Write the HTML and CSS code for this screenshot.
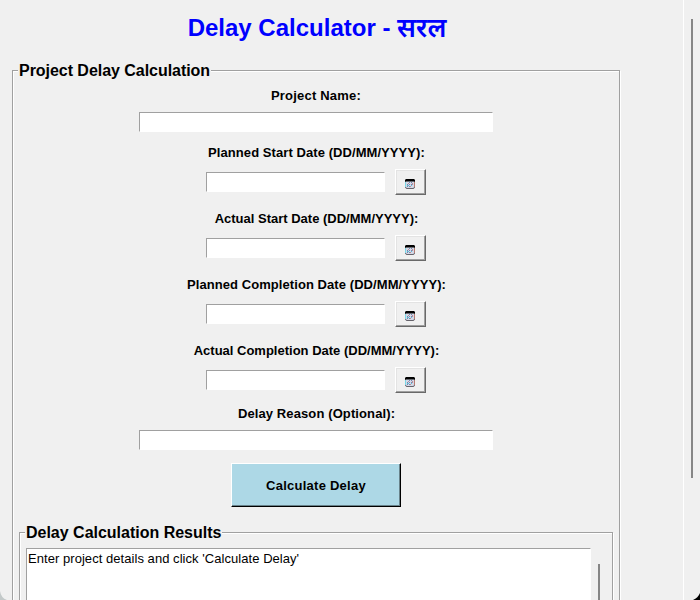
FILE: index.html
```html
<!DOCTYPE html>
<html lang="en">
<head>
<meta charset="utf-8">
<title>Delay Calculator</title>
<link rel="stylesheet" href="styles.css">
</head>
<body>
<svg class="defs" width="0" height="0" aria-hidden="true">
  <symbol id="calendar" viewBox="0 0 10 10">
    <rect x=".5" y=".5" width="9" height="9" rx="1.5" fill="#d3d8e6" stroke="#66636b"/>
    <path d="M1 0h8l1 1v1.5H0V1z" fill="#000"/>
    <path d="M.5 3v5" stroke="#79d6e6"/>
    <path d="M9.5 3v5" stroke="#b77c72"/>
    <path d="M4 3.5h1M6 3.5h1M2 5.5h1M4 5.5h1M6 5.5h1M2 7.5h1M4 7.5h1" stroke="#7484ad"/>
    <path d="M3 4.5h1M7 5.5h1M5 7.5h1M7 4.5h1" stroke="#b58d9b"/>
    <path d="M2 6.5h2M6 6.5h1" stroke="#60bcd3"/>
  </symbol>
</svg>
<div class="window">
  <main class="content">
    <h1 class="title"><span class="latin">Delay Calculator - </span><span class="hindi" lang="hi">सरल</span></h1>
    <section class="group project">
      <h2 class="legend">Project Delay Calculation</h2>
      <label class="label name">Project Name:</label>
      <input class="entry wide">
      <label class="label first">Planned Start Date (DD/MM/YYYY):</label>
      <div class="date-row"><input class="entry"><button class="picker"><svg width="10" height="10"><use href="#calendar"/></svg></button></div>
      <label class="label actual">Actual Start Date (DD/MM/YYYY):</label>
      <div class="date-row"><input class="entry"><button class="picker"><svg width="10" height="10"><use href="#calendar"/></svg></button></div>
      <label class="label">Planned Completion Date (DD/MM/YYYY):</label>
      <div class="date-row"><input class="entry"><button class="picker"><svg width="10" height="10"><use href="#calendar"/></svg></button></div>
      <label class="label actual">Actual Completion Date (DD/MM/YYYY):</label>
      <div class="date-row"><input class="entry"><button class="picker"><svg width="10" height="10"><use href="#calendar"/></svg></button></div>
      <label class="label reason">Delay Reason (Optional):</label>
      <input class="entry wide">
      <button class="calculate">Calculate Delay</button>
      <section class="group results">
        <h2 class="legend">Delay Calculation Results</h2>
        <div class="output-row">
          <div class="output">Enter project details and click 'Calculate Delay'</div>
          <div class="output-thumb"></div>
        </div>
      </section>
    </section>
  </main>
  <aside class="scrollbar"><div class="thumb"></div></aside>
</div>
<svg class="corner left" width="7" height="9" viewBox="0 0 7 9"><path d="M0 0Q1 7 7 9H0z" fill="#c3c9c9"/></svg>
<svg class="corner right" width="7" height="7" viewBox="0 0 7 7"><path d="M7 0Q5 5 0 7H7z" fill="#000"/></svg>
</body>
</html>
```
FILE: styles.css
```css
* { box-sizing: border-box; }
body {
  margin: 0;
  width: 700px;
  height: 600px;
  overflow: hidden;
  background: #f0f0f0;
  color: #000;
  font-family: "Liberation Sans", Arial, sans-serif;
}
.defs { position: absolute; }
.window { display: flex; height: 600px; overflow: hidden; }
.content {
  width: 683px;
  flex: none;
  padding-left: 12px;
}
.title {
  width: 609px;
  height: 70px;
  margin: 0;
  padding: 12px 0 0 1px;
  display: flex;
  justify-content: center;
  color: #00f;
  font-size: 24px;
  line-height: 32px;
  white-space: pre;
}
.hindi {
  padding-top: 3px;
  font-family: "Noto Sans Devanagari", "Noto Sans", sans-serif;
  font-size: 26.5px;
  font-weight: 600;
}
.group {
  border: 1px solid #a0a0a0;
  box-shadow: 1px 1px 0 #fff, inset 1px 1px 0 #fff;
}
.project {
  width: 608px;
  height: 760px;
  display: flex;
  flex-direction: column;
  align-items: center;
}
.project > * { flex-shrink: 0; }
.legend {
  width: fit-content;
  align-self: flex-start;
  height: 20px;
  margin: -10px 0 0 5px;
  padding: 0 1px;
  background: #f0f0f0;
  font-size: 16px;
  line-height: 20px;
  letter-spacing: -0.04px;
  white-space: nowrap;
}
.results .legend { letter-spacing: -0.01px; }
.label {
  height: 16px;
  margin-top: 16px;
  padding-left: 1px;
  font-size: 13px;
  font-weight: bold;
  line-height: 16px;
  letter-spacing: 0.07px;
  white-space: nowrap;
}
.label.name { margin: 7px 0 8px; padding-left: 0; letter-spacing: 0.2px; }
.label.first { margin-top: 13px; }
.label.actual { letter-spacing: 0; }
.label.reason { margin: 13px 0 8px; letter-spacing: 0.11px; }
.entry {
  width: 179px;
  height: 20px;
  padding: 0;
  border: 1px solid #fff;
  border-top-color: #a0a0a0;
  border-left-color: #a0a0a0;
  border-radius: 0;
  background: #fff;
  outline: none;
}
.entry.wide { width: 354px; }
.date-row {
  display: flex;
  align-items: center;
  gap: 10px;
  height: 26px;
  margin-top: 8px;
}
.picker {
  display: flex;
  align-items: center;
  justify-content: center;
  width: 31px;
  height: 26px;
  padding: 4px 1px 0 0;
  border: 1px solid #696969;
  border-top-color: #fff;
  border-left-color: #fff;
  background: #f0f0f0;
  box-shadow: inset -1px -1px 0 #a0a0a0, inset 1px 1px 0 #e3e3e3;
}
.calculate {
  width: 170px;
  height: 44px;
  margin-top: 13px;
  padding: 1px 0 0;
  border: 1px solid #000;
  border-top-color: #fff;
  border-left-color: #fff;
  background: #add8e6;
  box-shadow: inset -1px -1px 0 #68828a;
  color: #000;
  font: bold 13px "Liberation Sans", Arial, sans-serif;
  letter-spacing: 0.25px;
}
.results {
  align-self: flex-start;
  width: 594px;
  height: 300px;
  margin: 25px 0 0 6px;
}
.output-row { display: flex; margin: 5px 0 0 6px; }
.output {
  width: 565px;
  height: 280px;
  padding: 2px 0 0 1px;
  border: 1px solid #fff;
  border-top-color: #a0a0a0;
  border-left-color: #a0a0a0;
  background: #fff;
  font-size: 13px;
  line-height: 16px;
  letter-spacing: 0.05px;
}
.output-thumb { width: 2px; height: 260px; margin: 16px 0 0 7px; background: #868686; }
.scrollbar { width: 17px; flex: none; border-left: 1px solid #fff; }
.thumb { width: 2px; height: 459px; margin: 19px 0 0 7px; background: #868686; }
.corner { position: absolute; bottom: 0; }
.corner.left { left: 0; }
.corner.right { right: 0; }
```
